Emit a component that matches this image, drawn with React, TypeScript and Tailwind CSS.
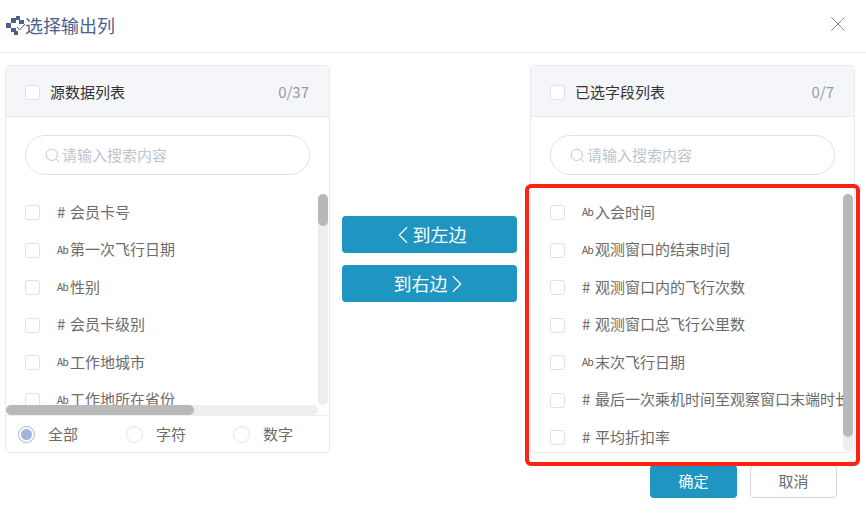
import { ChevronLeft, ChevronRight, Search, X } from "lucide-react";

const font = "font-['Noto_Sans_CJK_SC','Noto_Sans',sans-serif]";

const sourceRows = [
  { type: "#", label: "会员卡号" },
  { type: "Ab", label: "第一次飞行日期" },
  { type: "Ab", label: "性别" },
  { type: "#", label: "会员卡级别" },
  { type: "Ab", label: "工作地城市" },
  { type: "Ab", label: "工作地所在省份" },
];

const selectedRows = [
  { type: "Ab", label: "入会时间" },
  { type: "Ab", label: "观测窗口的结束时间" },
  { type: "#", label: "观测窗口内的飞行次数" },
  { type: "#", label: "观测窗口总飞行公里数" },
  { type: "Ab", label: "末次飞行日期" },
  { type: "#", label: "最后一次乘机时间至观察窗口末端时长" },
  { type: "#", label: "平均折扣率" },
];

function Checkbox() {
  return <span className="block w-[15px] h-[15px] shrink-0 rounded-[3px] border border-[#dfe1e9] bg-white" />;
}

function Row({ type, label }: { type: string; label: string }) {
  return (
    <div className="flex items-center h-[37.5px] pl-[19px] whitespace-nowrap">
      <Checkbox />
      <span className="flex items-center ml-[17px] pb-[2px] text-[15px] text-[#6b6b6b]">
        {type === "#" ? (
          <span className="w-[13px] text-[15px]">#</span>
        ) : (
          <span className="w-[13px] text-[10px] tracking-[-0.5px] text-[#555]">Ab</span>
        )}
        {label}
      </span>
    </div>
  );
}

function PanelHeader({ title, count }: { title: string; count: string }) {
  return (
    <div className="flex items-center h-[51px] pt-[3px] pl-[19px] pr-[20px] bg-[#f5f6fa] border-b border-[#e8eaf1]">
      <Checkbox />
      <span className="ml-[10px] text-[15px] text-[#333]">{title}</span>
      <span className="ml-auto text-[15px] text-[#999]">{count}</span>
    </div>
  );
}

function SearchBox() {
  return (
    <div className="px-[19px] pt-[18px] pb-[19px]">
      <div className="flex items-center h-[40px] pl-[18px] rounded-full border border-[#dfe1e9]">
        <Search className="w-[17px] h-[17px] text-[#c0c4cc]" strokeWidth={1.4} />
        <span className="ml-[1px] text-[15px] text-[#c0c4cc]">请输入搜索内容</span>
      </div>
    </div>
  );
}

function Radio({ label, checked }: { label: string; checked?: boolean }) {
  return (
    <div className="flex items-center gap-[13px]">
      <span
        className={
          "flex items-center justify-center w-[17px] h-[17px] rounded-full border " +
          (checked ? "border-[#a3b5da]" : "border-[#dfe1e9]")
        }
      >
        {checked && <span className="w-[11px] h-[11px] rounded-full bg-[#a3b5da]" />}
      </span>
      <span className="text-[15px] text-[#6b6b6b]">{label}</span>
    </div>
  );
}

function TitleIcon() {
  return (
    <svg width="19" height="20" viewBox="0 0 19 20" className="shrink-0">
      <g fill="#4a6190">
        <rect x="0" y="7" width="5" height="5" />
        <rect x="5" y="2" width="5" height="5" />
        <rect x="5" y="12" width="5" height="4" />
        <rect x="8" y="15" width="4" height="4" />
        <rect x="10" y="0" width="4" height="4" />
        <rect x="13" y="4" width="5" height="4" />
      </g>
      <path d="M11 11 l2.5 3 L19 8" fill="none" stroke="#4a6190" strokeWidth="1" />
    </svg>
  );
}

export default function App() {
  return (
    <div className={`relative w-[866px] h-[515px] overflow-hidden bg-white ${font}`}>
      {/* Header */}
      <div className="flex items-center h-[53px] pl-[6px] pr-[15px] border-b border-[#eceef3]">
        <TitleIcon />
        <span className="pb-[2px] text-[18px] text-[#4a6190]">选择输出列</span>
        <X className="ml-auto mb-[4px] w-[26px] h-[26px] text-[#8a8d94]" strokeWidth={0.9} />
      </div>

      {/* Transfer */}
      <div className="flex mt-[12px] ml-[5px]">
        <div className="flex flex-col w-[325px] h-[388px] rounded-[4px] border border-[#e8eaf1] overflow-hidden">
          <PanelHeader title="源数据列表" count="0/37" />
          <SearchBox />
          <div className="relative flex-1 overflow-hidden">
            {sourceRows.map((r) => (
              <Row key={r.label} {...r} />
            ))}
            <div className="absolute top-0 left-[312px] w-[10px] h-[211px] rounded-full bg-[#eeeeee]">
              <div className="w-[10px] h-[32px] rounded-full bg-[#b8b8b8]" />
            </div>
            <div className="absolute top-[211px] left-0 w-[312px] h-[10px] rounded-full bg-[#eeeeee]">
              <div className="w-[188px] h-[10px] rounded-full bg-[#b8b8b8]" />
            </div>
          </div>
          <div className="grid grid-cols-[108px_107px_1fr] items-center h-[37px] pl-[12px] border-t border-[#eceef3]">
            <Radio label="全部" checked />
            <Radio label="字符" />
            <Radio label="数字" />
          </div>
        </div>

        <div className="flex flex-col justify-center gap-[12px] w-[175px] ml-[12px] mr-[13px]">
          <button className="flex items-center justify-center h-[37px] pr-[5px] rounded-[4px] bg-[#1f95c1] text-[18px] text-white">
            <ChevronLeft className="w-[30px] h-[30px] -mr-[5px]" strokeWidth={0.9} />
            到左边
          </button>
          <button className="flex items-center justify-center h-[37px] pl-[6px] rounded-[4px] bg-[#1f95c1] text-[18px] text-white">
            到右边
            <ChevronRight className="w-[30px] h-[30px] -ml-[6px]" strokeWidth={0.9} />
          </button>
        </div>

        <div className="flex flex-col w-[325px] h-[388px] rounded-[4px] border border-[#e8eaf1] overflow-hidden">
          <PanelHeader title="已选字段列表" count="0/7" />
          <SearchBox />
          <div className="relative flex-1 overflow-hidden">
            <div className="w-[312px] overflow-hidden">
              {selectedRows.map((r) => (
                <Row key={r.label} {...r} />
              ))}
            </div>
            <div className="absolute top-0 left-[312px] w-[10px] h-[257px] rounded-full bg-[#eeeeee]">
              <div className="w-[10px] h-[243px] rounded-full bg-[#b8b8b8]" />
            </div>
          </div>
        </div>
      </div>

      {/* Footer */}
      <div className="flex justify-end gap-[13px] mt-[12px] pr-[29px]">
        <button className="w-[87px] h-[33px] rounded-[4px] bg-[#1f95c1] text-[15px] text-white">确定</button>
        <button className="w-[87px] h-[33px] rounded-[4px] border border-[#d5d5d5] text-[15px] text-[#6b6b6b]">取消</button>
      </div>

      {/* Red annotation */}
      <div className="absolute left-[525px] top-[184px] w-[335px] h-[282px] rounded-[6px] border-[4px] border-[#fb2414]" />
    </div>
  );
}
